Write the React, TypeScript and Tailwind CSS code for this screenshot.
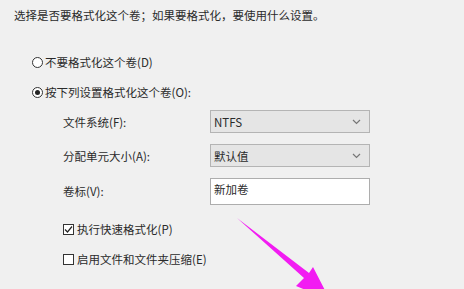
import React from 'react';

const font = { fontFamily: '"Noto Sans CJK SC", "Noto Sans", sans-serif' };

const Radio = ({ checked, label }: { checked?: boolean; label: string }) => (
  <div className="flex items-center h-[14px]">
    <span className="w-[11px] h-[11px] rounded-full border border-[#333] bg-white flex items-center justify-center mr-[2px]">
      {checked && <span className="w-[5px] h-[5px] rounded-full bg-[#222]" />}
    </span>
    <span>{label}</span>
  </div>
);

const Check = ({ checked, label }: { checked?: boolean; label: string }) => (
  <div className="flex items-center h-[14px]">
    <span className="w-[11px] h-[11px] border border-[#333] bg-white flex items-center justify-center mr-[3px]">
      {checked && (
        <svg width="9" height="9" viewBox="0 0 9 9">
          <path d="M1 4.5 L3.5 7 L8 1.5" fill="none" stroke="#222" strokeWidth="1.2" />
        </svg>
      )}
    </span>
    <span>{label}</span>
  </div>
);

const Select = ({ value }: { value: string }) => (
  <div className="w-[160px] h-[23px] bg-[#e5e5e5] border border-[#b4b4b4] flex items-center justify-between pl-[3px] pr-[8px]">
    <span>{value}</span>
    <svg width="9" height="6" viewBox="0 0 9 6">
      <path d="M1 1 L4.5 4.5 L8 1" fill="none" stroke="#777" strokeWidth="1.2" />
    </svg>
  </div>
);

export default function App() {
  return (
    <div className="relative w-[464px] h-[289px] bg-[#f0f0f0] overflow-hidden text-[11.5px] text-[#2a2a2a] leading-[14px]" style={font}>
      <div className="pt-[8px] pl-[14px]">选择是否要格式化这个卷；如果要格式化，要使用什么设置。</div>

      <div className="pl-[32px] mt-[33px] flex flex-col gap-[16px]">
        <Radio label="不要格式化这个卷(D)" />
        <Radio checked label="按下列设置格式化这个卷(O):" />
      </div>

      <div className="pl-[63px] mt-[11px] flex flex-col gap-[11px]">
        <div className="flex items-center">
          <span className="w-[147px]">文件系统(F):</span>
          <Select value="NTFS" />
        </div>
        <div className="flex items-center">
          <span className="w-[147px]">分配单元大小(A):</span>
          <Select value="默认值" />
        </div>
        <div className="flex items-start">
          <span className="w-[147px] mt-[6px]">卷标(V):</span>
          <div className="w-[160px] h-[27px] bg-white border border-[#adadad] pl-[3px] pt-[3px]">新加卷</div>
        </div>
      </div>

      <div className="pl-[63px] mt-[17px] flex flex-col gap-[16px]">
        <Check checked label="执行快速格式化(P)" />
        <Check label="启用文件和文件夹压缩(E)" />
      </div>

      <svg className="absolute left-0 top-0" width="464" height="289" viewBox="0 0 464 289">
        <polygon points="237,218 309,273 313,267 330,300 296,286 304,278" fill="#f21cf2" />
      </svg>
    </div>
  );
}
